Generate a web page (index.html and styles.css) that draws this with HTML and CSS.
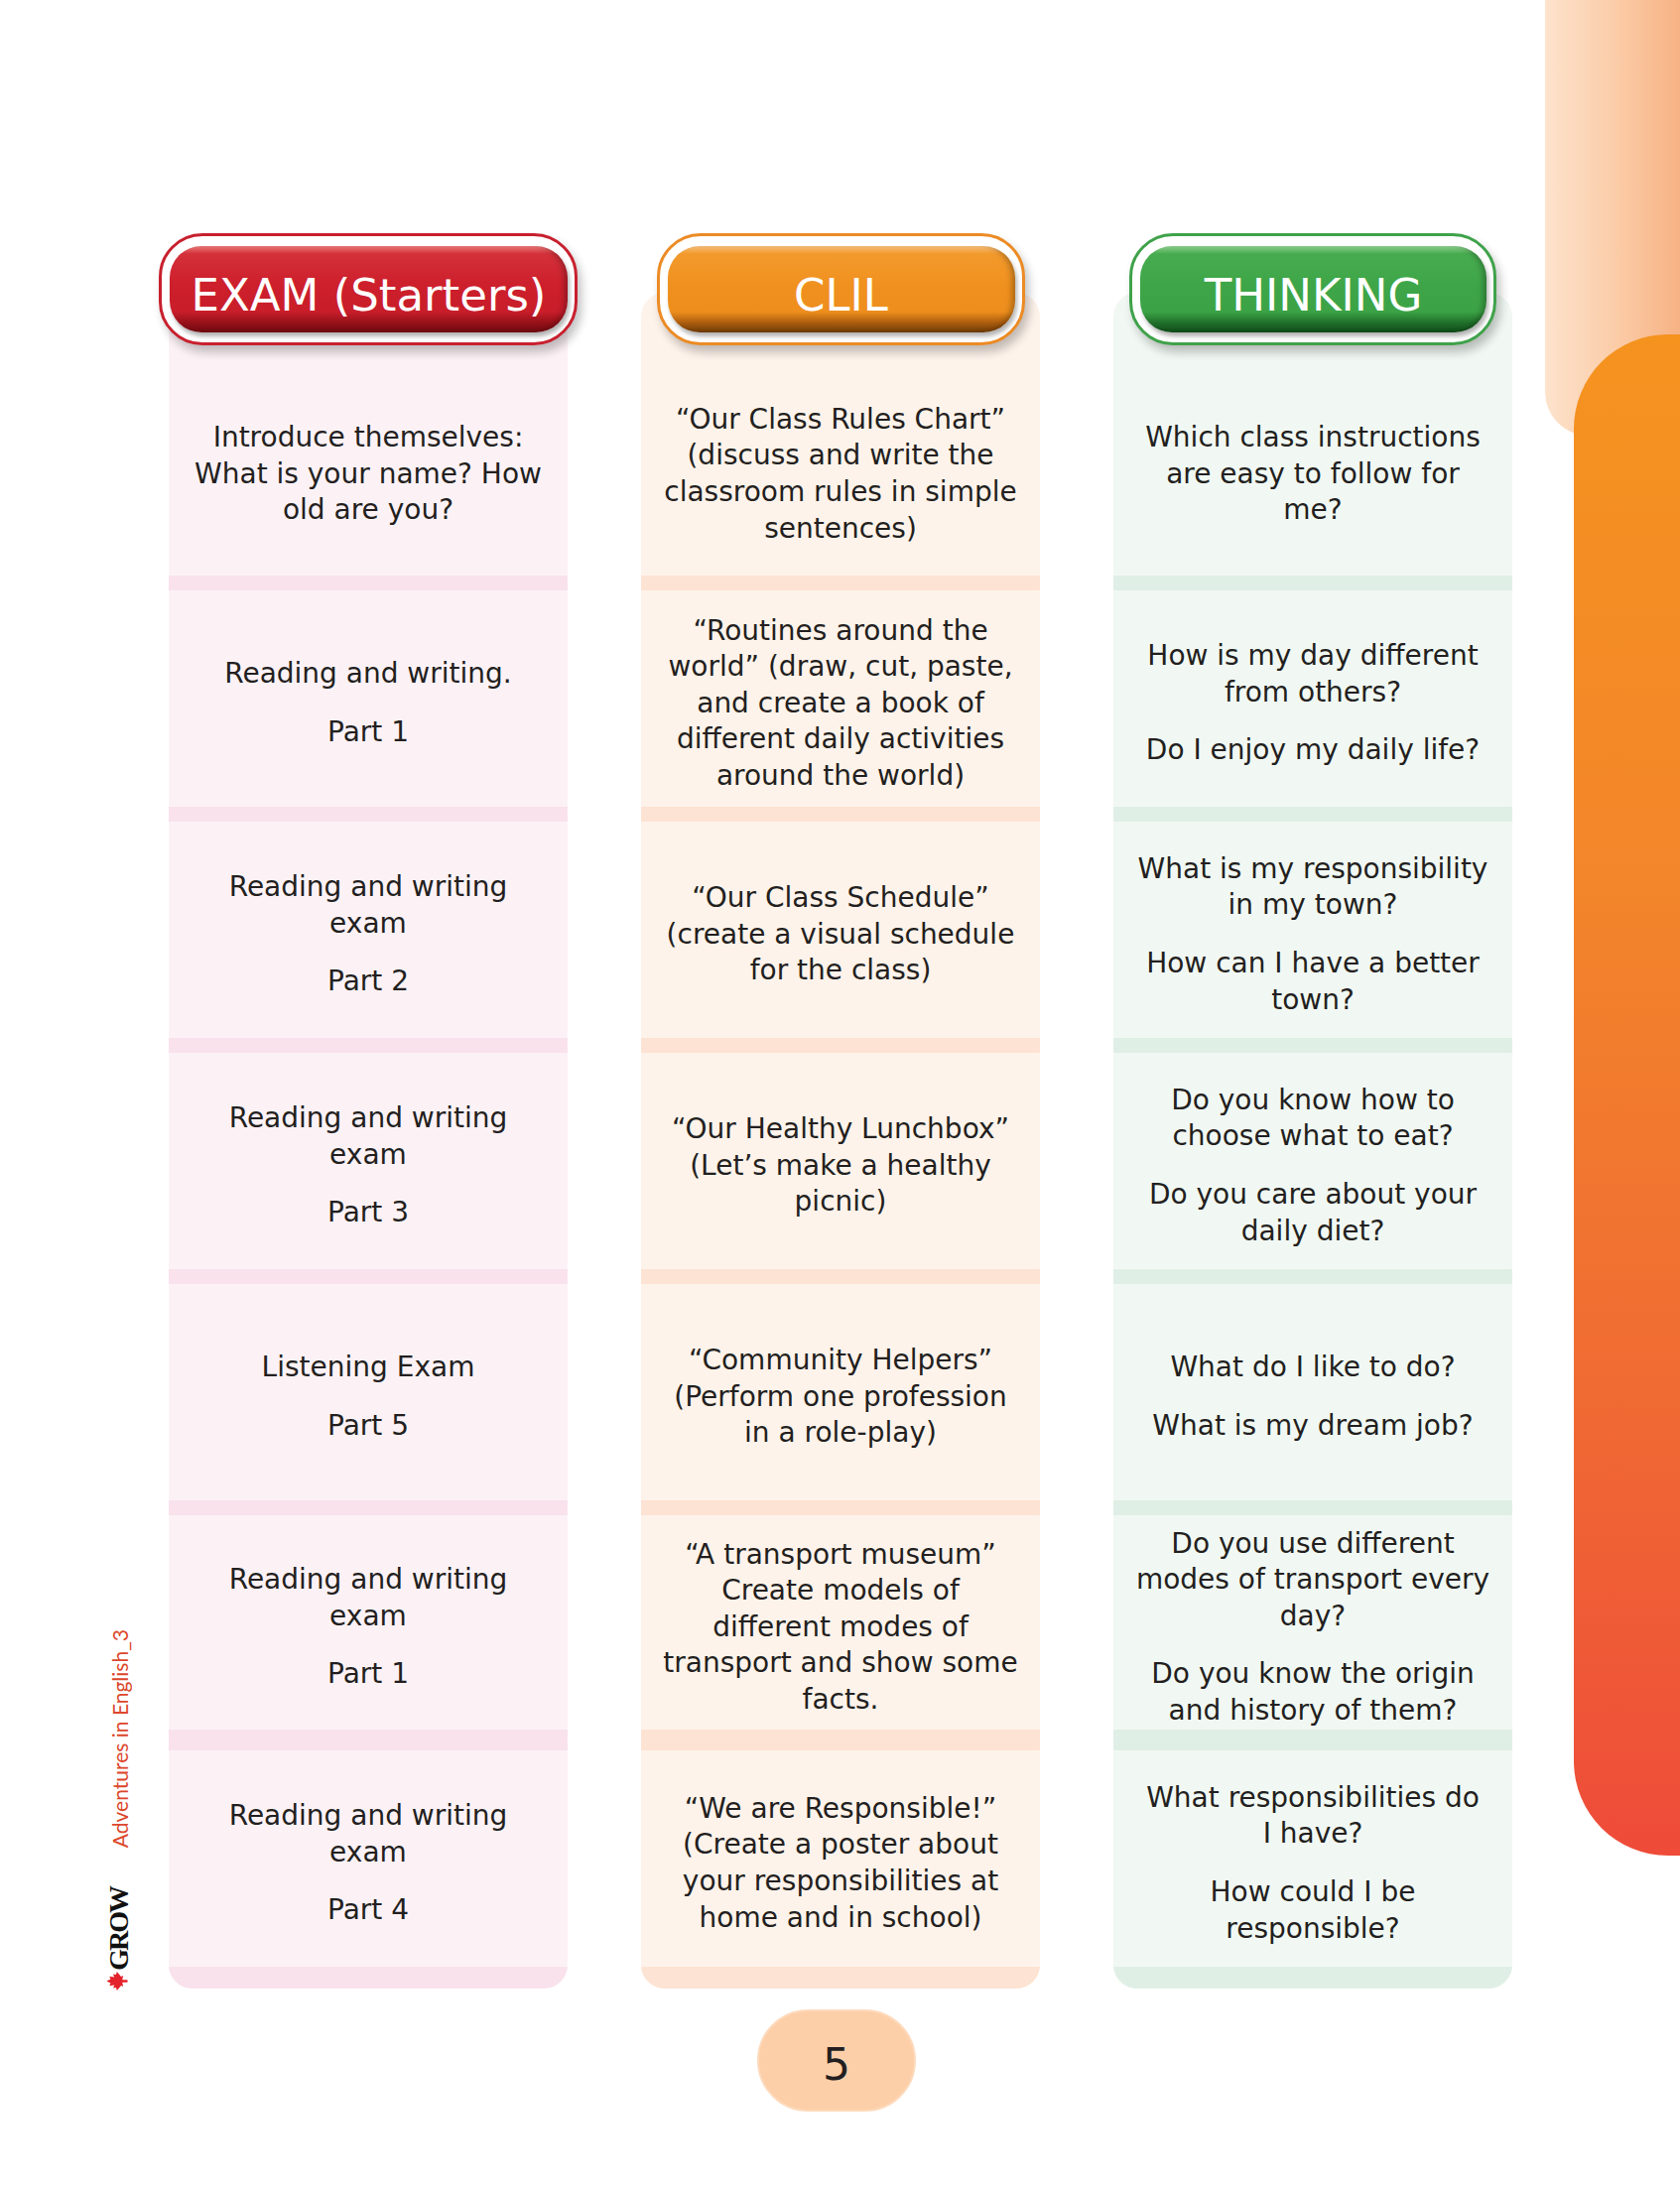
FILE: index.html
```html
<!DOCTYPE html>
<html lang="en">
<head>
<meta charset="utf-8">
<title>Adventures in English 3 – page 5</title>
<link rel="stylesheet" href="styles.css">
</head>
<body>
<div class="page">
  <div class="deco-peach"></div>
  <div class="deco-orange"></div>

  <aside class="side">
    <span class="side-title">Adventures in English_3</span>
    <div class="logo">
      <span class="logo-text">GROW</span>
      <svg class="logo-leaf" viewBox="0 0 24 24" width="23" height="23" aria-hidden="true">
        <path d="M12 1.5l2.2 4.2 2.8-1.2-.9 5.2 3.2-1.4-.6 3.1 3.3 1-5.2 4.3.9 2.2-4.3-.9v5.5h-2.8v-5.5l-4.3.9.9-2.2-5.2-4.3 3.3-1-.6-3.1 3.2 1.4-.9-5.2 2.8 1.2z" fill="#e3222b" transform="rotate(-90 12 12)"/>
      </svg>
    </div>
  </aside>

  <main class="table">
    <section class="col col-exam">
      <div class="head"><div class="head-pill">EXAM (Starters)</div></div>
      <div class="body">
        <div class="cell first"><p>Introduce themselves:<br>What is your name? How<br>old are you?</p></div>
        <div class="cell"><p>Reading and writing.</p><p>Part 1</p></div>
        <div class="cell"><p>Reading and writing<br>exam</p><p>Part 2</p></div>
        <div class="cell"><p>Reading and writing<br>exam</p><p>Part 3</p></div>
        <div class="cell"><p>Listening Exam</p><p>Part 5</p></div>
        <div class="cell sixth"><p>Reading and writing<br>exam</p><p>Part 1</p></div>
        <div class="cell last"><p>Reading and writing<br>exam</p><p>Part 4</p></div>
      </div>
    </section>

    <section class="col col-clil">
      <div class="head"><div class="head-pill">CLIL</div></div>
      <div class="body">
        <div class="cell first"><p>“Our Class Rules Chart”<br>(discuss and write the<br>classroom rules in simple<br>sentences)</p></div>
        <div class="cell"><p>“Routines around the<br>world” (draw, cut, paste,<br>and create a book of<br>different daily activities<br>around the world)</p></div>
        <div class="cell"><p>“Our Class Schedule”<br>(create a visual schedule<br>for the class)</p></div>
        <div class="cell"><p>“Our Healthy Lunchbox”<br>(Let’s make a healthy<br>picnic)</p></div>
        <div class="cell"><p>“Community Helpers”<br>(Perform one profession<br>in a role-play)</p></div>
        <div class="cell sixth"><p>“A transport museum”<br>Create models of<br>different modes of<br>transport and show some<br>facts.</p></div>
        <div class="cell last"><p>“We are Responsible!”<br>(Create a poster about<br>your responsibilities at<br>home and in school)</p></div>
      </div>
    </section>

    <section class="col col-think">
      <div class="head"><div class="head-pill">THINKING</div></div>
      <div class="body">
        <div class="cell first"><p>Which class instructions<br>are easy to follow for<br>me?</p></div>
        <div class="cell"><p>How is my day different<br>from others?</p><p>Do I enjoy my daily life?</p></div>
        <div class="cell"><p>What is my responsibility<br>in my town?</p><p>How can I have a better<br>town?</p></div>
        <div class="cell"><p>Do you know how to<br>choose what to eat?</p><p>Do you care about your<br>daily diet?</p></div>
        <div class="cell"><p>What do I like to do?</p><p>What is my dream job?</p></div>
        <div class="cell sixth"><p>Do you use different<br>modes of transport every<br>day?</p><p>Do you know the origin<br>and history of them?</p></div>
        <div class="cell last"><p>What responsibilities do<br>I have?</p><p>How could I be<br>responsible?</p></div>
      </div>
    </section>

    <div class="page-num">5</div>
  </main>
</div>
</body>
</html>
```

FILE: styles.css
```css
* { box-sizing: border-box; }

html, body {
  margin: 0;
  padding: 0;
}

body {
  width: 1693px;
  height: 2205px;
  background: #ffffff;
  font-family: "DejaVu Sans", "Noto Sans", sans-serif;
  color: #231f20;
}

.page {
  position: relative;
  width: 1693px;
  height: 2205px;
  overflow: hidden;
}

/* right edge decoration */
.deco-peach {
  position: absolute;
  left: 1557px;
  top: 0;
  width: 136px;
  height: 439px;
  border-bottom-left-radius: 44px;
  background: linear-gradient(90deg, #fde3cc 0%, #fbcba6 55%, #f6b284 100%);
}

.deco-orange {
  position: absolute;
  left: 1586px;
  top: 337px;
  width: 230px;
  height: 1533px;
  border-radius: 95px;
  background: linear-gradient(180deg, #f5931f 0%, #f3862a 35%, #f06a33 70%, #ee4b39 100%);
}

/* left margin: title + logo */
.side {
  position: absolute;
  left: 100px;
  top: 1642px;
  width: 40px;
  display: flex;
  flex-direction: column;
  align-items: center;
}

.side-title {
  writing-mode: vertical-rl;
  transform: rotate(180deg);
  font-family: Lato, "Open Sans", sans-serif;
  font-size: 21px;
  line-height: 21px;
  color: #dc472c;
  white-space: nowrap;
}

.logo {
  margin-top: 40px;
  display: flex;
  flex-direction: column;
  align-items: center;
}

.logo-text {
  writing-mode: vertical-rl;
  transform: rotate(180deg);
  font-family: "Liberation Serif", "DejaVu Serif", serif;
  font-weight: bold;
  font-size: 28px;
  line-height: 22px;
  letter-spacing: -2px;
  color: #111111;
  white-space: nowrap;
}

.logo-leaf {
  display: block;
  margin-top: -1px;
  margin-left: -6px;
}

/* table */
.table {
  display: grid;
  grid-template-columns: repeat(3, 402px);
  column-gap: 74px;
  padding: 235px 0 0 170px;
}

.col {
  display: flex;
  flex-direction: column;
  align-items: center;
  min-width: 0;
}

.head {
  position: relative;
  z-index: 2;
  flex-shrink: 0;
  display: flex;
  height: 113px;
  margin-bottom: -53px;
  padding: 10px 7px 10px 8px;
  border: 3px solid;
  border-radius: 44px;
  background: #ffffff;
  box-shadow: 4px 7px 10px rgba(0, 0, 0, 0.24);
}

.head-pill {
  flex: 1;
  display: flex;
  align-items: center;
  justify-content: center;
  padding-top: 12px;
  border-radius: 32px;
  color: #ffffff;
  font-size: 45px;
  line-height: 1;
  white-space: nowrap;
  box-shadow: 2px 4px 4px rgba(0, 0, 0, 0.3), inset -6px 0 6px -3px rgba(0, 0, 0, 0.3);
}

.col-exam .head { width: 422px; border-color: #c8202e; }
.col-clil .head { width: 371px; border-color: #ec8b25; }
.col-think .head { width: 370px; border-color: #3fa24a; }

.col-exam .head-pill {
  background: linear-gradient(180deg, #ea7a78 0%, #d4313a 9%, #cd1f2c 45%, #c91d2a 76%, #991219 88%, #6e0a10 100%);
}

.col-clil .head-pill {
  background: linear-gradient(180deg, #f8bf7c 0%, #f29a2c 9%, #f0911f 45%, #ee8e1d 76%, #b0600f 88%, #6e3a06 100%);
}

.col-think .head-pill {
  background: linear-gradient(180deg, #8fd18f 0%, #47ab4f 9%, #3ea648 45%, #3ba345 76%, #22722c 88%, #0f4a18 100%);
}

.body {
  width: 100%;
  border-radius: 24px;
  overflow: hidden;
}

.col-exam .body { background: #fcf2f6; }
.col-clil .body { background: #fef3eb; }
.col-think .body { background: #f1f8f3; }

.cell {
  display: flex;
  flex-direction: column;
  align-items: center;
  justify-content: center;
  height: 233px;
  padding: 10px 8px 0;
  border-bottom: 15px solid;
  text-align: center;
  font-size: 28px;
  line-height: 36.6px;
}

.col-exam .cell { border-bottom-color: #f9e2ec; }
.col-clil .cell { border-bottom-color: #fde3d3; }
.col-think .cell { border-bottom-color: #e0efe5; }

.cell.first {
  height: 300px;
  padding-top: 81px;
}

.cell.sixth {
  height: 237px;
  border-bottom-width: 21px;
}

.cell.last {
  height: 240px;
  border-bottom-width: 22px;
}

.cell p {
  margin: 0;
  white-space: nowrap;
}

.cell p + p {
  margin-top: 22px;
}

.page-num {
  grid-column: 2;
  justify-self: center;
  margin-top: 21px;
  margin-right: 8px;
  width: 160px;
  height: 103px;
  display: flex;
  align-items: center;
  justify-content: center;
  padding-top: 8px;
  border: 2px solid #fddabc;
  border-radius: 52px;
  background: #fdcfa8;
  font-size: 44px;
  line-height: 1;
  color: #231f20;
}
```
